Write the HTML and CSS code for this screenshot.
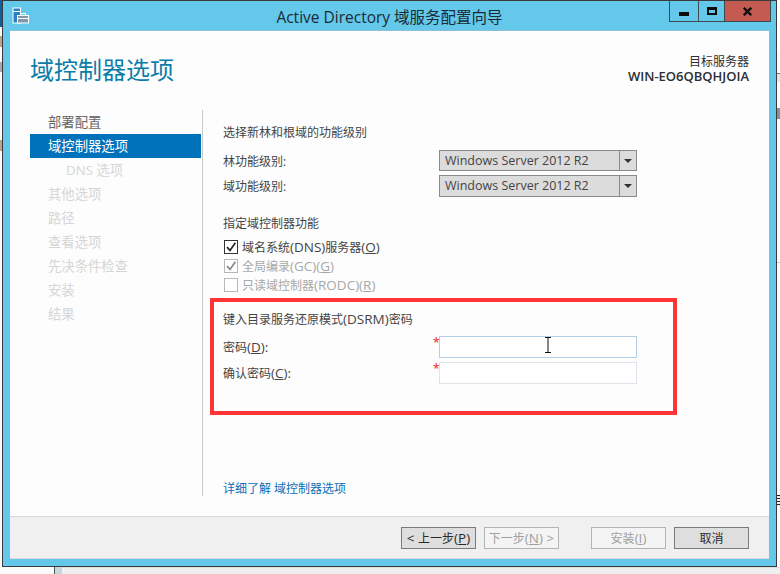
FILE: index.html
```html
<!DOCTYPE html>
<html lang="zh-CN">
<head>
<meta charset="utf-8">
<title>Active Directory 域服务配置向导</title>
<link rel="stylesheet" href="styles.css">
</head>
<body>
<div class="desktop">
  <span class="frag frag-l1"></span>
  <span class="frag frag-l2"></span>
  <span class="frag frag-l3"></span>
  <span class="frag frag-l4"></span>
  <span class="frag frag-r1"></span>
  <span class="frag frag-r2"></span>
  <span class="frag frag-r3"></span>
  <span class="frag frag-r4"></span>
  <span class="frag frag-r5"></span>
  <div class="under-window"><span class="under-tab"></span></div>

  <div class="window">
    <header class="titlebar">
      <svg class="app-icon" width="17" height="17" viewBox="0 0 17 17">
        <rect x="1" y="1" width="7.5" height="15" fill="#2f7fc4" stroke="#fff" stroke-width="1"/>
        <line x1="1" y1="4.5" x2="8.5" y2="4.5" stroke="#fff"/>
        <rect x="5.5" y="8.5" width="11" height="7.5" fill="#7f97aa" stroke="#fff" stroke-width="1"/>
        <path d="M8.5 8.5V6.5H13.5V8.5" fill="none" stroke="#fff"/>
        <line x1="5.5" y1="11.5" x2="16.5" y2="11.5" stroke="#fff"/>
      </svg>
      <div class="title">Active Directory 域服务配置向导</div>
      <div class="controls">
        <div class="ctl ctl-min"><span class="min-bar"></span></div>
        <div class="ctl ctl-max"><span class="max-box"></span></div>
        <div class="ctl ctl-close">
          <svg width="9" height="9" viewBox="0 0 9 9"><path d="M0.8 0.8L8.2 8.2M8.2 0.8L0.8 8.2" stroke="#111" stroke-width="2.4" fill="none"/></svg>
        </div>
      </div>
    </header>

    <div class="client">
      <div class="page-head">
        <h1 class="page-title">域控制器选项</h1>
        <div class="server">
          <div>目标服务器</div>
          <div class="server-name">WIN-EO6QBQHJOIA</div>
        </div>
      </div>

      <div class="page-body">
        <nav class="nav">
          <div class="nav-item nav-done">部署配置</div>
          <div class="nav-item nav-active">域控制器选项</div>
          <div class="nav-item nav-sub">DNS 选项</div>
          <div class="nav-item">其他选项</div>
          <div class="nav-item">路径</div>
          <div class="nav-item">查看选项</div>
          <div class="nav-item">先决条件检查</div>
          <div class="nav-item">安装</div>
          <div class="nav-item">结果</div>
        </nav>

        <main class="main">
          <div class="section-label">选择新林和根域的功能级别</div>
          <div class="field field-first">
            <label class="field-label">林功能级别:</label>
            <div class="combo"><span class="combo-text">Windows Server 2012 R2</span><span class="combo-btn"><span class="caret"></span></span></div>
          </div>
          <div class="field field-next field-tall">
            <label class="field-label">域功能级别:</label>
            <div class="combo"><span class="combo-text">Windows Server 2012 R2</span><span class="combo-btn"><span class="caret"></span></span></div>
          </div>

          <div class="section-label section-caps">指定域控制器功能</div>
          <div class="checks">
            <div class="check-row">
              <span class="box"><svg width="12" height="12" viewBox="0 0 12 12"><path d="M2 6.2L5 9.4L10.4 1.8" fill="none" stroke="#222" stroke-width="1.7"/></svg></span>
              <span>域名系统<span class="lat">(DNS)</span>服务器<span class="lat">(<u>O</u>)</span></span>
            </div>
            <div class="check-row is-disabled">
              <span class="box"><svg width="12" height="12" viewBox="0 0 12 12"><path d="M2 6.2L5 9.4L10.4 1.8" fill="none" stroke="#8a8a8a" stroke-width="1.7"/></svg></span>
              <span>全局编录<span class="lat">(GC)(<u>G</u>)</span></span>
            </div>
            <div class="check-row is-disabled">
              <span class="box"></span>
              <span>只读域控制器<span class="lat">(RODC)(<u>R</u>)</span></span>
            </div>
          </div>

          <div class="section-label section-dsrm">键入目录服务还原模式<span class="lat">(DSRM)</span>密码</div>
          <div class="field field-first">
            <label class="field-label">密码<span class="lat">(<u>D</u>):</span></label>
            <div class="pw pw-focus"><span class="req">*</span>
              <svg class="ibeam" width="7" height="16" viewBox="0 0 7 16"><path d="M0 0.5H6M0 15.5H6M3 0.5V15.5" stroke="#111" fill="none"/></svg>
            </div>
          </div>
          <div class="field field-next">
            <label class="field-label">确认密码<span class="lat">(<u>C</u>):</span></label>
            <div class="pw"><span class="req">*</span></div>
          </div>

          <a class="more" href="#">详细了解 域控制器选项</a>
          <div class="annotation"></div>
        </main>
      </div>

      <footer class="footer">
        <button class="btn"><span class="lat">&lt;&nbsp;</span>上一步<span class="lat">(<u>P</u>)</span></button>
        <button class="btn btn-off">下一步<span class="lat">(<u>N</u>)&nbsp;&gt;</span></button>
        <button class="btn btn-off btn-install">安装<span class="lat">(<u>I</u>)</span></button>
        <button class="btn">取消</button>
      </footer>
    </div>
  </div>
</div>
</body>
</html>
```

FILE: styles.css
```css
* { box-sizing: border-box; }
html, body { margin: 0; padding: 0; }
body {
  width: 780px;
  height: 574px;
  overflow: hidden;
  font-family: "Open Sans", "Noto Sans CJK SC", sans-serif;
  font-size: 12px;
  color: #333;
}
.lat { font-size: 13.5px; }
.desktop {
  position: relative;
  width: 780px;
  height: 574px;
  background: #fafafa;
  overflow: hidden;
}
.frag { position: absolute; display: block; }
.frag-l1 { left: 0; top: 0; width: 2px; height: 27px; background: #0f5f9e; }
.frag-l2 { left: 0; top: 36px; width: 2px; height: 11px; background: #b9a48f; }
.frag-l3 { left: 0; top: 62px; width: 2px; height: 10px; background: #a8a8b0; }
.frag-l4 { left: 0; top: 140px; width: 2px; height: 11px; background: #b9a48f; }
.frag-r1 { left: 777px; top: 0; width: 3px; height: 52px; background: #fff; }
.frag-r2 { left: 777px; top: 73px; width: 3px; height: 9px; background: linear-gradient(#777 0 1px, #e6e6e6 1px); }
.frag-r3 { left: 777px; top: 108px; width: 3px; height: 11px; background: #8a8f96; }
.frag-r4 { left: 777px; top: 262px; width: 3px; height: 1px; background: #c8c8c8; }
.frag-r5 { left: 777px; top: 495px; width: 3px; height: 12px; background: repeating-linear-gradient(#222 0 1px, #eee 1px 3px); }
.under-window {
  position: absolute;
  left: 54px;
  top: 567px;
  right: 0;
  height: 7px;
  display: flex;
  background: #efefef;
  border-top: 1px solid #dedede;
}
.under-tab {
  width: 8px;
  margin-top: -1px;
  background: #c5d6df;
  border-left: 1px solid #555;
}

.window {
  position: absolute;
  left: 2px;
  top: 0;
  width: 775px;
  height: 567px;
  border: 1px solid #3a3a3a;
  background: #63c8ea;
  padding: 0 7px 7px 7px;
  display: flex;
  flex-direction: column;
}
.titlebar {
  position: relative;
  flex: 0 0 30px;
  margin: 0 -7px;
  display: flex;
  align-items: center;
  justify-content: center;
}
.app-icon { position: absolute; left: 9px; top: 6px; }
.title {
  font-size: 15.5px;
  color: #1c2a33;
  padding-top: 1px;
}
.controls {
  position: absolute;
  right: 5px;
  top: -1px;
  height: 22px;
  display: flex;
  border: 1px solid #3d4a52;
  border-top-color: #3a3a3a;
}
.ctl {
  display: flex;
  align-items: center;
  justify-content: center;
  height: 100%;
  border-left: 1px solid #3d4a52;
}
.ctl:first-child { border-left: 0; }
.ctl-min { width: 28px; }
.ctl-max { width: 26px; }
.ctl-close { width: 46px; background: #c45b50; }
.min-bar { width: 10px; height: 4px; margin-top: 6px; background: #0c0c0c; }
.max-box { width: 10px; height: 8px; border: 2px solid #0c0c0c; border-top-width: 3px; }

.client {
  flex: 1;
  min-height: 0;
  display: flex;
  flex-direction: column;
  background: #fdfdfd;
  box-shadow: 0 -1px 0 #8fbfd4;
}
.page-head {
  flex: 0 0 79px;
  display: flex;
  justify-content: space-between;
  padding: 0 20px;
}
.page-title {
  margin: 22px 0 0;
  font-size: 24px;
  line-height: 34px;
  font-weight: 400;
  color: #0a7ca8;
}
.server {
  margin-top: 23px;
  text-align: right;
  font-size: 12px;
  line-height: 15px;
  color: #2c2f33;
}
.server-name { font-size: 13px; font-weight: 600; }

.page-body {
  flex: 1;
  min-height: 0;
  display: flex;
  padding: 0 0 20px 20px;
}
.nav { width: 172px; flex: 0 0 172px; padding-right: 1px; }
.nav-item {
  height: 24px;
  line-height: 24px;
  padding-left: 18px;
  font-size: 13.33px;
  color: #d6d6d6;
}
.nav-done { color: #666; }
.nav-active { background: #0072bc; color: #fff; }
.nav-sub { padding-left: 36px; }

.main {
  position: relative;
  flex: 1;
  display: flex;
  flex-direction: column;
  padding: 14px 0 0 20px;
  border-left: 1px solid #c8c8c8;
}
.section-label { height: 16px; line-height: 18px; color: #444; }
.section-caps { margin-top: 18px; }
.section-dsrm { margin-top: 16px; }
.field {
  display: flex;
  align-items: center;
  height: 21px;
}
.field-first { margin-top: 10px; }
.field-next { margin-top: 4px; }
.field-tall { height: 22px; }
.field-tall .combo-text { line-height: 20px; }
.field-label { width: 216px; flex: 0 0 216px; color: #444; }
.combo {
  width: 198px;
  height: 100%;
  display: flex;
  border: 1px solid #8a8a8a;
  background: #dcdcdc;
}
.combo-text {
  flex: 1;
  padding-left: 5px;
  font-size: 12.5px;
  line-height: 19px;
  color: #444;
}
.combo-btn {
  width: 17px;
  display: flex;
  align-items: center;
  justify-content: center;
  border-left: 1px solid #8a8a8a;
}
.caret {
  width: 0;
  height: 0;
  border: 4px solid transparent;
  border-top: 4px solid #333;
  border-bottom: 0;
}
.checks { margin-top: 6px; }
.check-row {
  display: flex;
  align-items: center;
  height: 19px;
  color: #444;
}
.box {
  width: 14px;
  height: 14px;
  margin: 0 4px 0 1px;
  display: flex;
  align-items: center;
  justify-content: center;
  border: 1px solid #333;
  background: #fff;
}
.is-disabled { color: #a8a8a8; }
.is-disabled .box { border-color: #b8b8b8; }
.pw {
  position: relative;
  width: 198px;
  height: 22px;
  background: #fff;
  border: 1px solid #e2e2ea;
}
.field:has(.pw) { height: 22px; }
.pw-focus { border-color: #b3cde6; }
.req {
  position: absolute;
  left: -7px;
  top: -1px;
  font-size: 12px;
  line-height: 14px;
  font-weight: 600;
  color: #f04040;
}
.ibeam { position: absolute; left: 105px; top: 0; }
.more {
  margin-top: auto;
  height: 16px;
  line-height: 18px;
  color: #0a6db5;
  text-decoration: none;
}
.annotation {
  position: absolute;
  left: 7px;
  top: 188px;
  width: 467px;
  height: 117px;
  border: 4px solid #ff3535;
  pointer-events: none;
}

.footer {
  flex: 0 0 43px;
  display: flex;
  align-items: center;
  justify-content: flex-end;
  gap: 8px;
  padding: 0 20px;
  background: #f0f0f0;
  border-top: 1px solid #d8d8d8;
  box-shadow: inset 0 -1px 0 #dcdcdc;
}
.btn {
  width: 75px;
  height: 22px;
  padding: 0;
  font: inherit;
  color: #2a2a2a;
  background: #dedede;
  border: 1px solid #7a7a7a;
}
.btn-off { color: #a0a0a0; background: #f4f4f4; border-color: #b4b4b4; }
.btn-install { margin-left: 24px; }
```
